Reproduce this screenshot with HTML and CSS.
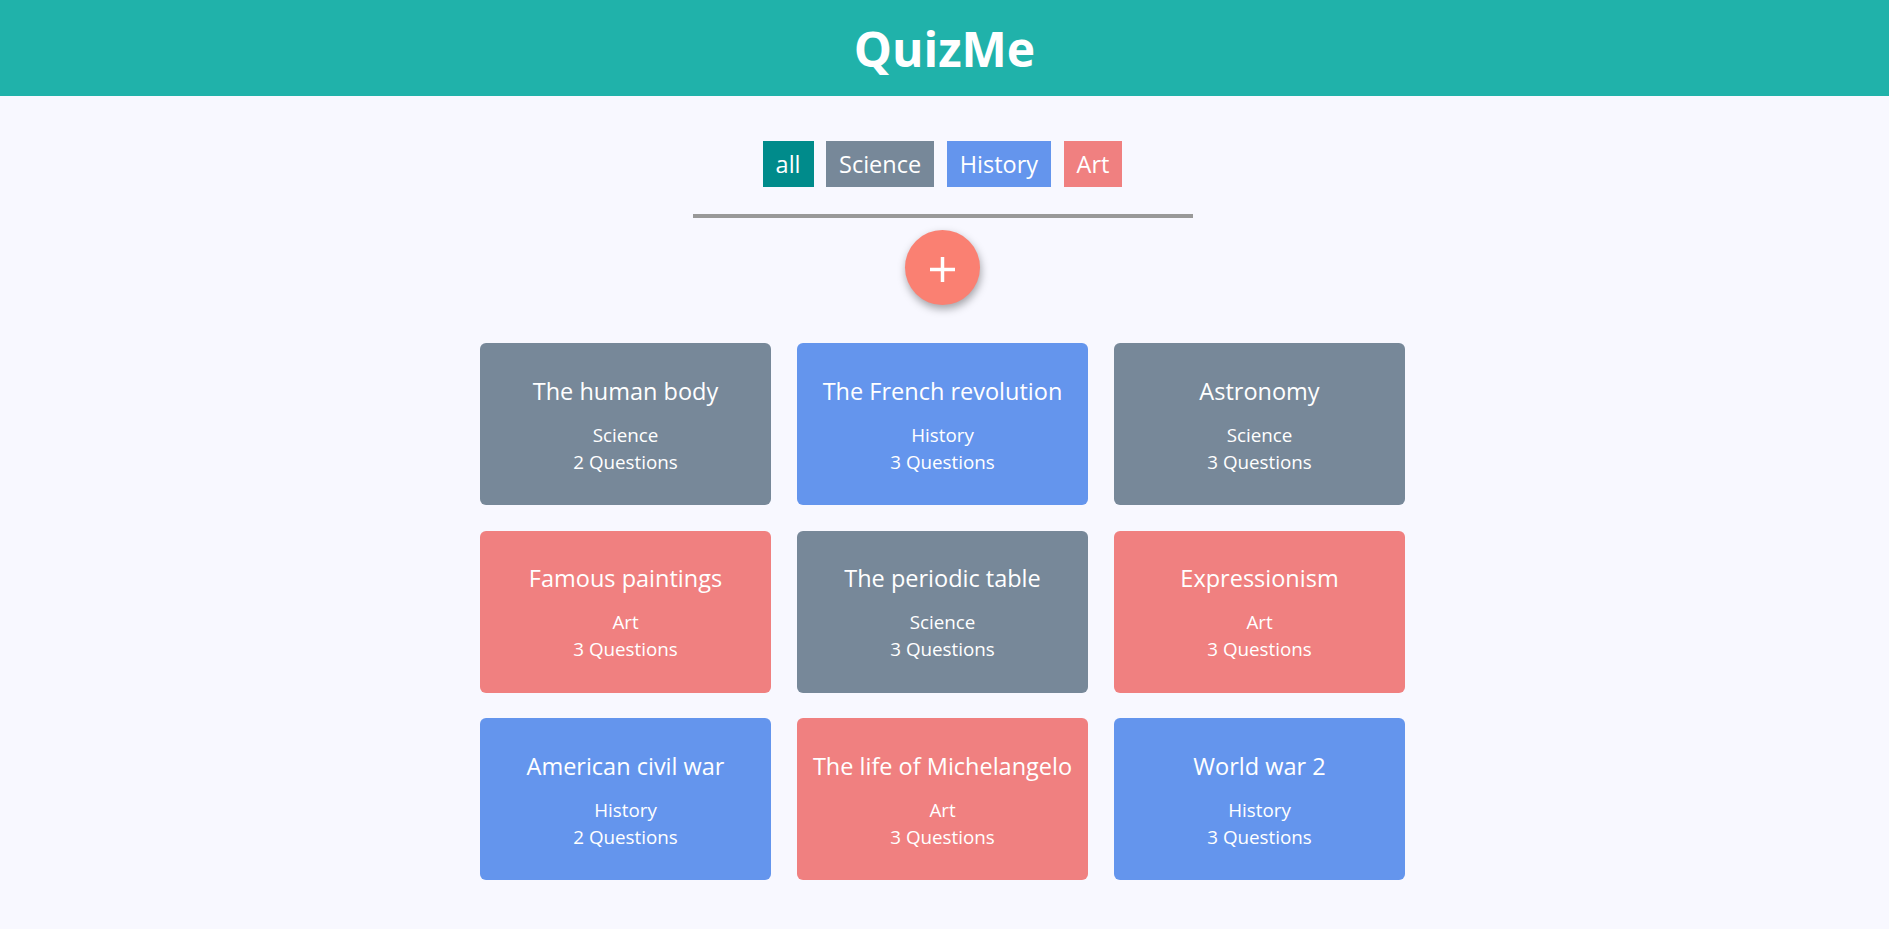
FILE: index.html
```html
<!DOCTYPE html>
<html lang="en">
<head>
<meta charset="utf-8">
<title>QuizMe</title>
<link rel="stylesheet" href="styles.css">
</head>
<body>
<header class="header">
  <h1 class="title">QuizMe</h1>
</header>
<main class="main">
  <section class="controls">
    <div class="filters">
      <button class="filter filter--all">all</button>
      <button class="filter filter--science">Science</button>
      <button class="filter filter--history">History</button>
      <button class="filter filter--art">Art</button>
    </div>
    <hr class="divider">
    <button class="add" aria-label="Add quiz">
      <svg class="add__icon" width="25" height="25" viewBox="0 0 25 25">
        <line x1="12.5" y1="0" x2="12.5" y2="25" stroke="#fff" stroke-width="3.5"/>
        <line x1="0" y1="12.5" x2="25" y2="12.5" stroke="#fff" stroke-width="3.5"/>
      </svg>
    </button>
  </section>
  <div class="grid">
    <div class="card card--science">
      <div class="card__title">The human body</div>
      <div class="card__meta">Science</div>
      <div class="card__meta">2 Questions</div>
    </div>
    <div class="card card--history">
      <div class="card__title">The French revolution</div>
      <div class="card__meta">History</div>
      <div class="card__meta">3 Questions</div>
    </div>
    <div class="card card--science">
      <div class="card__title">Astronomy</div>
      <div class="card__meta">Science</div>
      <div class="card__meta">3 Questions</div>
    </div>
    <div class="card card--art">
      <div class="card__title">Famous paintings</div>
      <div class="card__meta">Art</div>
      <div class="card__meta">3 Questions</div>
    </div>
    <div class="card card--science">
      <div class="card__title">The periodic table</div>
      <div class="card__meta">Science</div>
      <div class="card__meta">3 Questions</div>
    </div>
    <div class="card card--art">
      <div class="card__title">Expressionism</div>
      <div class="card__meta">Art</div>
      <div class="card__meta">3 Questions</div>
    </div>
    <div class="card card--history">
      <div class="card__title">American civil war</div>
      <div class="card__meta">History</div>
      <div class="card__meta">2 Questions</div>
    </div>
    <div class="card card--art">
      <div class="card__title">The life of Michelangelo</div>
      <div class="card__meta">Art</div>
      <div class="card__meta">3 Questions</div>
    </div>
    <div class="card card--history">
      <div class="card__title">World war 2</div>
      <div class="card__meta">History</div>
      <div class="card__meta">3 Questions</div>
    </div>
  </div>
</main>
</body>
</html>
```

FILE: styles.css
```css
* {
  box-sizing: border-box;
}

html, body {
  margin: 0;
  padding: 0;
}

body {
  background: #f8f8ff;
  font-family: "Open Sans", "Noto Sans", sans-serif;
  color: #fff;
  min-height: 929px;
}

.header {
  height: 96px;
  background: #20b2aa;
  display: flex;
  align-items: center;
  justify-content: center;
}

.title {
  margin: 0;
  font-size: 48px;
  font-weight: 700;
  color: #fff;
}

.main {
  padding-right: 4px;
}

.controls {
  display: flex;
  flex-direction: column;
  align-items: center;
}

.filters {
  margin-top: 45px;
  display: flex;
  gap: 12.5px;
}

.filter {
  font-family: inherit;
  font-size: 23.5px;
  line-height: 32px;
  padding: 7px 13px;
  border: none;
  border-radius: 0;
  color: #fff;
  cursor: pointer;
}

.filter--all { background: #008b8b; }
.filter--science { background: #778899; }
.filter--history { background: #6495ed; }
.filter--art { background: #f08080; }

.divider {
  width: 500px;
  height: 4px;
  margin: 27px 0 0;
  border: none;
  background: #999999;
}

.add {
  margin-top: 12px;
  width: 75px;
  height: 75px;
  border-radius: 50%;
  border: none;
  background: #fa8072;
  box-shadow: 1px 4px 8px rgba(0, 0, 0, 0.35);
  display: flex;
  align-items: center;
  justify-content: center;
  padding: 3px 0 0;
  cursor: pointer;
}

.add__icon {
  display: block;
}

.grid {
  margin: 38px auto 0;
  display: grid;
  grid-template-columns: repeat(3, 291.5px);
  grid-auto-rows: 162px;
  gap: 25.5px 25.5px;
  justify-content: center;
}

.card {
  border-radius: 6px;
  display: flex;
  flex-direction: column;
  align-items: center;
  justify-content: center;
  text-align: center;
  color: #fff;
  padding-top: 2px;
}

.card--science { background: #778899; }
.card--history { background: #6495ed; }
.card--art { background: #f08080; }

.card__title {
  font-size: 23.5px;
  line-height: 32px;
  margin-bottom: 15px;
}

.card__meta {
  font-size: 18.8px;
  line-height: 26.7px;
}
```
